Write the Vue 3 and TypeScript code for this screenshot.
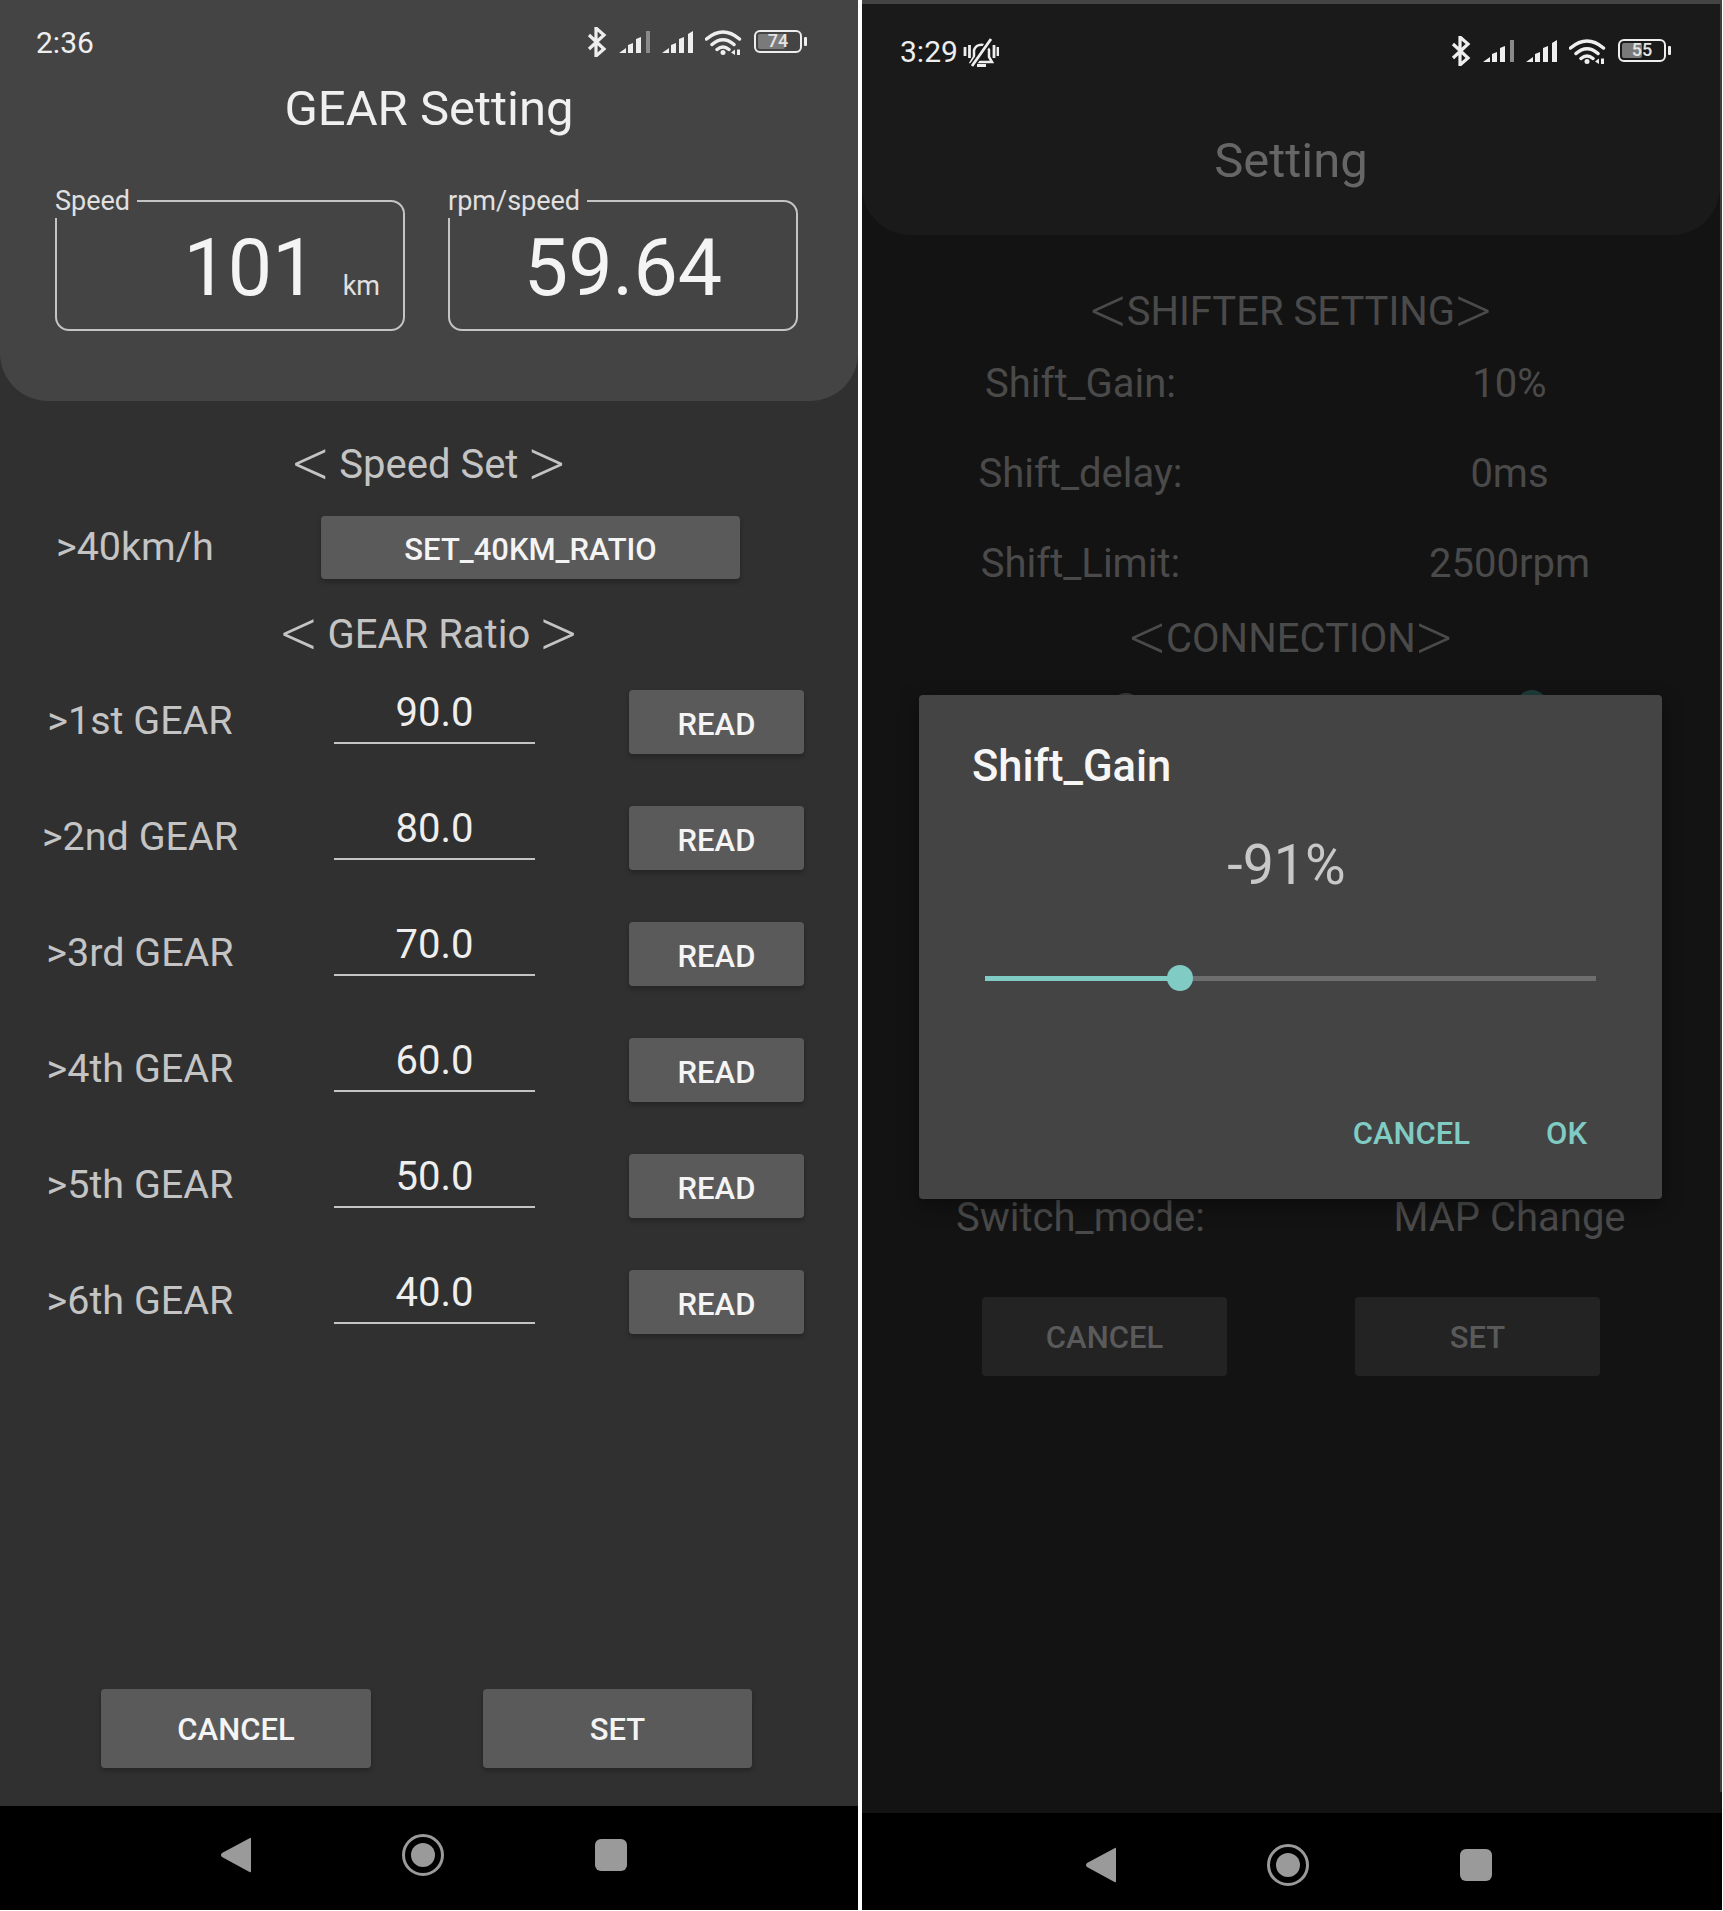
<script setup lang="ts">
interface Gear { label: string; value: string }
const gears: Gear[] = [
  { label: '>1st GEAR', value: '90.0' },
  { label: '>2nd GEAR', value: '80.0' },
  { label: '>3rd GEAR', value: '70.0' },
  { label: '>4th GEAR', value: '60.0' },
  { label: '>5th GEAR', value: '50.0' },
  { label: '>6th GEAR', value: '40.0' },
]
const shifter: [string, string][] = [
  ['Shift_Gain:', '10%'],
  ['Shift_delay:', '0ms'],
  ['Shift_Limit:', '2500rpm'],
]
const sliderFill = 195
</script>

<template>
  <div class="page">
    <!-- Left phone -->
    <section class="phone phone-light">
      <header class="head head-light">
        <div class="status status-light">
          <div class="status-left"><span class="time">2:36</span></div>
          <div class="status-icons">
            <svg class="bt" viewBox="0 0 20 30"><path d="M2 8 L17 22 L9 29 V1 L17 8 L2 22" /></svg>
            <svg class="sig" viewBox="0 0 31 22"><path d="M0 22 L7 17 V22Z M9 22 V14 L14 12 V22Z M17 22 V8 L22 6 V22Z" /><rect class="dimbar" x="27" y="0" width="4" height="22" /></svg>
            <svg class="sig" viewBox="0 0 31 22"><path d="M0 22 L7 17 V22Z M9 22 V14 L14 12 V22Z M17 22 V8 L22 6 V22Z M26 3 L31 0 V22 H26Z" /></svg>
            <svg class="wifi" viewBox="0 0 38 27"><path class="arc" d="M1.5 11 Q18 -3 34.5 11 M7 16.5 Q18 7 29 16.5 M12 21.5 Q18 16.5 24 21.5" /><circle cx="18" cy="24.5" r="2.5" /><path d="M26 24.5 L30 21.5 V27Z M32 21.5 H35 V27 H32Z" /></svg>
            <div class="battery"><div class="bat-fill fill-74"></div><span class="bat-num">74</span></div>
          </div>
        </div>
        <h1 class="title title-light">GEAR Setting</h1>
        <div class="boxes">
          <div class="box box-end">
            <span class="box-label">Speed</span>
            <span class="big">101</span><span class="unit">km</span>
          </div>
          <div class="box box-center">
            <span class="box-label">rpm/speed</span>
            <span class="big">59.64</span>
          </div>
        </div>
      </header>

      <main class="body body-light">
        <h2 class="section sec-speed"><span class="br br-wide">&lt;</span>Speed Set<span class="br br-wide">&gt;</span></h2>
        <div class="speed-row">
          <span class="row-label speed-label">&gt;40km/h</span>
          <button class="btn btn-ratio">SET_40KM_RATIO</button>
        </div>
        <h2 class="section sec-gear"><span class="br br-wide">&lt;</span>GEAR Ratio<span class="br br-wide">&gt;</span></h2>
        <div class="gears">
          <div v-for="g in gears" :key="g.label" class="gear-row">
            <span class="row-label gear-label">{{ g.label }}</span>
            <span class="field">{{ g.value }}</span>
            <span class="spacer"></span>
            <button class="btn btn-read">READ</button>
          </div>
        </div>
        <div class="footer">
          <button class="btn btn-foot">CANCEL</button>
          <button class="btn btn-foot">SET</button>
        </div>
      </main>

      <nav class="nav nav-light">
        <svg class="n-back" viewBox="0 0 30 36"><path d="M29 1 Q30 0 30 2 V34 Q30 36 28.500 35 L1 20 Q-1 18 1 16Z" /></svg>
        <svg class="n-home" viewBox="0 0 42 42"><circle class="ring" cx="21" cy="21" r="19.500" /><circle cx="21" cy="21" r="12" /></svg>
        <div class="n-recent"></div>
      </nav>
    </section>

    <div class="divider"></div>

    <!-- Right phone -->
    <section class="phone phone-dim">
      <header class="head head-dim">
        <div class="status status-dim">
          <div class="status-left">
            <span class="time">3:29</span>
            <svg class="bell" viewBox="0 0 36 30">
              <path class="bell-line" d="M8 25 H29 L26 20 V13 A8 8 0 0 0 11 13 V20Z" />
              <path class="bell-cut" d="M9 29 L29 1" />
              <path class="bell-line bell-thick" d="M9 29 L28 2 M14 28.500 H23 M2 10 V19 M6.500 8 V21 M31 8 V21 M35 10 V19" />
            </svg>
          </div>
          <div class="status-icons">
            <svg class="bt" viewBox="0 0 20 30"><path d="M2 8 L17 22 L9 29 V1 L17 8 L2 22" /></svg>
            <svg class="sig" viewBox="0 0 31 22"><path d="M0 22 L7 17 V22Z M9 22 V14 L14 12 V22Z M17 22 V8 L22 6 V22Z" /><rect class="dimbar" x="27" y="0" width="4" height="22" /></svg>
            <svg class="sig" viewBox="0 0 31 22"><path d="M0 22 L7 17 V22Z M9 22 V14 L14 12 V22Z M17 22 V8 L22 6 V22Z M26 3 L31 0 V22 H26Z" /></svg>
            <svg class="wifi" viewBox="0 0 38 27"><path class="arc" d="M1.5 11 Q18 -3 34.5 11 M7 16.5 Q18 7 29 16.5 M12 21.5 Q18 16.5 24 21.5" /><circle cx="18" cy="24.5" r="2.5" /><path d="M26 24.5 L30 21.5 V27Z M32 21.5 H35 V27 H32Z" /></svg>
            <div class="battery"><div class="bat-fill fill-55"></div><span class="bat-num">55</span></div>
          </div>
        </div>
        <h1 class="title title-dim">Setting</h1>
      </header>

      <main class="body body-dim">
        <h2 class="section dim-text sec-shifter"><span class="br">&lt;</span>SHIFTER SETTING<span class="br">&gt;</span></h2>
        <div class="dim-rows">
          <div v-for="r in shifter" :key="r[0]" class="dim-row">
            <span>{{ r[0] }}</span><span>{{ r[1] }}</span>
          </div>
        </div>
        <h2 class="section dim-text sec-conn"><span class="br">&lt;</span>CONNECTION<span class="br">&gt;</span></h2>
        <div class="hidden-block">
          <span class="thumb thumb-off"></span>
          <span class="thumb thumb-on"></span>
        </div>
        <div class="dim-row">
          <span>Switch_mode:</span><span>MAP Change</span>
        </div>
        <div class="dim-foot">
          <button class="btn btn-dim">CANCEL</button>
          <button class="btn btn-dim">SET</button>
        </div>
      </main>

      <nav class="nav nav-dim">
        <svg class="n-back" viewBox="0 0 30 36"><path d="M29 1 Q30 0 30 2 V34 Q30 36 28.500 35 L1 20 Q-1 18 1 16Z" /></svg>
        <svg class="n-home" viewBox="0 0 42 42"><circle class="ring" cx="21" cy="21" r="19.500" /><circle cx="21" cy="21" r="12" /></svg>
        <div class="n-recent"></div>
      </nav>

      <div class="dialog">
        <div class="dlg-title">Shift_Gain</div>
        <div class="dlg-value">-91%</div>
        <div class="slider">
          <div class="slider-fill" :style="{ width: sliderFill + 'px' }"></div>
          <div class="slider-thumb" :style="{ left: sliderFill - 13 + 'px' }"></div>
        </div>
        <div class="dlg-actions">
          <span>CANCEL</span>
          <span>OK</span>
        </div>
      </div>
    </section>
  </div>
</template>

<style scoped>
.page {
  display: flex;
  width: 1723px;
  height: 1911px;
  background: #fff;
  font-family: Roboto, "Liberation Sans", sans-serif;
  overflow: hidden;
}
.phone {
  display: flex;
  flex-direction: column;
  height: 1910px;
  box-sizing: border-box;
  position: relative;
}
.phone-light { width: 858px; background: #303030; }
.phone-dim { width: 860px; background: #131313; border-top: 4px solid #444; }
.phone-dim::after {
  content: "";
  position: absolute;
  top: 0;
  right: 0;
  bottom: 118px;
  width: 2px;
  background: #3e3e3e;
}
.divider { width: 4px; flex: none; }

.head {
  box-sizing: border-box;
  border-radius: 0 0 48px 48px;
  flex: none;
}
.head-light { height: 401px; background: #444; }
.head-dim { height: 231px; width: 858px; background: #1a1a1a; }

.status {
  display: flex;
  justify-content: space-between;
  align-items: center;
  box-sizing: border-box;
}
.status-light { height: 86px; padding: 0 51px 0 36px; }
.status-dim { height: 96px; padding: 0 49px 0 38px; }
.status-left { display: flex; align-items: center; gap: 5px; }
.time { font-size: 30px; line-height: 34px; color: #eee; }
.status-icons { display: flex; align-items: center; gap: 12px; margin-bottom: 3px; }
.bt { width: 20px; height: 30px; fill: none; stroke: #eee; stroke-width: 3.200; }
.sig { width: 31px; height: 22px; fill: #eee; }
.dimbar { fill: #8a8a8a; }
.wifi { width: 38px; height: 27px; fill: #eee; margin-right: -1px; }
.arc { fill: none; stroke: #eee; stroke-width: 3.500; stroke-linecap: round; }
.bell { width: 36px; height: 30px; fill: none; }
.bell-line { stroke: #eee; stroke-width: 2.500; fill: none; }
.bell-cut { stroke: #1a1a1a; stroke-width: 6; }
.bell-thick { stroke-width: 2.800; }

.battery {
  position: relative;
  width: 48px;
  height: 23px;
  box-sizing: border-box;
  border: 2.500px solid #eee;
  border-radius: 6px;
  margin-right: 5px;
  padding: 2px;
}
.battery::after {
  content: "";
  position: absolute;
  right: -7px;
  top: 5px;
  width: 3px;
  height: 9px;
  background: #eee;
  border-radius: 1px;
}
.bat-fill { height: 100%; background: #7a7a7a; border-radius: 2px; }
.fill-74 { width: 68%; }
.fill-55 { width: 50%; }
.bat-num {
  position: absolute;
  left: 0;
  right: 0;
  top: 0;
  text-align: center;
  font-size: 18px;
  line-height: 18px;
  font-weight: 500;
  color: #e4e4e4;
}

.title { margin: 0; text-align: center; font-size: 49px; line-height: 46px; font-weight: 400; }
.title-light { color: #f0f0f0; }
.title-dim { color: #666; margin-top: 38px; }

.boxes {
  display: grid;
  grid-template-columns: 350px 350px;
  column-gap: 43px;
  padding-left: 55px;
  margin-top: 68px;
}
.box {
  position: relative;
  display: flex;
  align-items: baseline;
  box-sizing: border-box;
  height: 131px;
  border: 2px solid #c4c4c4;
  border-radius: 14px;
  padding-top: 27px;
}
.box-end { justify-content: flex-end; padding-right: 23px; }
.box-center { justify-content: center; }
.box-label {
  position: absolute;
  left: -2px;
  top: -16px;
  padding: 0 7px 2px 0;
  background: #444;
  font-size: 27px;
  line-height: 30px;
  color: #e0e0e0;
}
.big { font-size: 79px; line-height: 78px; color: #f4f4f4; }
.unit { font-size: 27px; line-height: 30px; color: #e0e0e0; margin-left: 26px; }

.body { flex: 1; display: flex; flex-direction: column; min-height: 0; }
.section {
  margin: 0;
  text-align: center;
  font-size: 40px;
  line-height: 40px;
  font-weight: 400;
  color: #c4c4c4;
}
.br {
  font-size: 74px;
  font-weight: 200;
  line-height: 0;
  vertical-align: -10px;
  margin: 0 -1px;
}
.br-wide { margin: 0 9px; }
.sec-speed { margin-top: 44px; }
.sec-gear { margin-top: 36px; }
.row-label { font-size: 39.500px; line-height: 44px; color: #c4c4c4; }
.speed-label { padding-bottom: 2px; }

.speed-row {
  display: grid;
  grid-template-columns: 265px 419px;
  align-items: center;
  padding-left: 56px;
  margin-top: 31px;
}
.btn {
  border: none;
  border-radius: 4px;
  background: #5a5a5a;
  color: #f4f4f4;
  font-family: inherit;
  font-weight: 500;
  font-size: 31px;
  padding: 0;
  box-shadow: 0 3px 5px rgba(0, 0, 0, 0.25);
}
.btn-ratio { height: 63px; padding-top: 3px; }

.gears { display: flex; flex-direction: column; gap: 52px; margin-top: 35px; }
.gear-row {
  display: grid;
  grid-template-columns: 280px 54px 201px 94px 175px;
  height: 64px;
  align-items: center;
}
.gear-label { text-align: center; padding-bottom: 2px; }
.field {
  grid-column: 3;
  align-self: start;
  box-sizing: border-box;
  height: 54px;
  padding-bottom: 6px;
  border-bottom: 2px solid #c4c4c4;
  text-align: center;
  font-size: 40px;
  line-height: 46px;
  color: #eee;
}
.spacer { grid-column: 4; }
.btn-read { grid-column: 5; height: 64px; padding-top: 5px; }

.footer {
  margin-top: auto;
  display: grid;
  grid-template-columns: 270px 269px;
  column-gap: 112px;
  padding: 0 0 38px 101px;
}
.btn-foot { height: 79px; padding-top: 2px; }

.nav {
  flex: none;
  display: grid;
  grid-template-columns: 30px 42px 32px;
  column-gap: 151px;
  align-content: center;
  align-items: center;
  box-sizing: border-box;
  background: #000;
}
.nav-light { height: 104px; padding: 0 0 6px 221px; }
.nav-dim { height: 97px; padding: 6px 0 0 224px; }
.n-back { width: 30px; height: 36px; fill: #9a9a9a; }
.n-home { width: 42px; height: 42px; fill: #9a9a9a; }
.ring { fill: none; stroke: #9a9a9a; stroke-width: 3; }
.n-recent { width: 32px; height: 32px; background: #9a9a9a; border-radius: 6px; }

.body-dim { width: 858px; }
.dim-text { color: #4a4a4a; }
.sec-shifter { margin-top: 57px; }
.sec-conn { margin-top: 35px; }
.dim-rows { display: flex; flex-direction: column; gap: 50px; margin-top: 32px; }
.dim-row {
  display: grid;
  grid-template-columns: 437px 421px;
  justify-items: center;
  font-size: 40px;
  line-height: 40px;
  color: #4a4a4a;
}
.hidden-block {
  height: 539px;
  display: flex;
  flex: none;
  align-items: flex-start;
  box-sizing: border-box;
  padding: 31px 0 0 248px;
}
.thumb { width: 32px; height: 32px; border-radius: 50%; flex: none; }
.thumb-off { background: #3a3a3a; margin-top: 3px; }
.thumb-on { background: #1f3d3a; margin-left: 374px; }
.dim-foot {
  display: grid;
  grid-template-columns: 245px 245px;
  column-gap: 128px;
  padding-left: 120px;
  margin-top: 59px;
}
.btn-dim { height: 79px; padding-top: 2px; background: #232323; color: #5a5a5a; box-shadow: none; }

.dialog {
  position: absolute;
  left: 57px;
  top: 691px;
  width: 743px;
  height: 504px;
  box-sizing: border-box;
  background: #444;
  border-radius: 4px;
  padding-top: 50px;
  box-shadow: 0 6px 20px rgba(0, 0, 0, 0.4);
}
.dlg-title {
  padding-left: 53px;
  font-size: 43.500px;
  line-height: 44px;
  font-weight: 500;
  color: #f6f6f6;
}
.dlg-value {
  margin-top: 47px;
  padding-right: 8px;
  text-align: center;
  font-size: 55.500px;
  line-height: 60px;
  color: #c8c8c8;
}
.slider {
  position: relative;
  width: 611px;
  height: 26px;
  margin: 69px 0 0 66px;
  background: linear-gradient(#6e6e6e, #6e6e6e) center / 100% 5px no-repeat;
}
.slider-fill {
  position: absolute;
  left: 0;
  top: 10.500px;
  height: 5px;
  background: #80cbc4;
}
.slider-thumb {
  position: absolute;
  top: 0;
  width: 26px;
  height: 26px;
  border-radius: 50%;
  background: #80cbc4;
}
.dlg-actions {
  display: flex;
  justify-content: flex-end;
  gap: 76px;
  margin-top: 125px;
  padding-right: 75px;
  font-size: 31px;
  line-height: 36px;
  font-weight: 500;
  color: #80cbc4;
}
</style>
